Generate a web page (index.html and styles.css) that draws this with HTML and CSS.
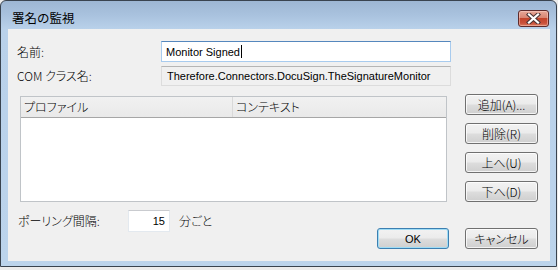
FILE: index.html
```html
<!DOCTYPE html>
<html lang="ja">
<head>
<meta charset="utf-8">
<title>署名の監視</title>
<link rel="stylesheet" href="styles.css">
</head>
<body>
<div class="window">
  <div class="titlebar">
    <span class="title">署名の監視</span>
    <div class="close">
      <svg width="17" height="11" viewBox="0 0 17 11">
        <path d="M4 1.5 L13 9.5 M13 1.5 L4 9.5" stroke="#4a3434" stroke-width="4.2" stroke-linecap="square" fill="none"/>
        <path d="M4 1.5 L13 9.5 M13 1.5 L4 9.5" stroke="#ffffff" stroke-width="2.2" stroke-linecap="square" fill="none"/>
      </svg>
    </div>
  </div>
  <div class="content">
    <div class="fields">
      <span class="label">名前:</span>
      <div class="input focused"><span class="latin">Monitor Signed</span><span class="caret"></span></div>
      <span class="label">COM クラス名:</span>
      <div class="input readonly"><span class="latin">Therefore.Connectors.DocuSign.TheSignatureMonitor</span></div>
    </div>
    <div class="middle">
      <div class="listview">
        <div class="lv-header">
          <div class="lv-col first">プロファイル</div>
          <div class="lv-col">コンテキスト</div>
        </div>
      </div>
      <div class="side-buttons">
        <div class="btn">追加(A)...</div>
        <div class="btn">削除(R)</div>
        <div class="btn">上へ(U)</div>
        <div class="btn">下へ(D)</div>
      </div>
    </div>
    <div class="bottom">
      <div class="polling">
        <span class="label poll-label">ポーリング間隔:</span>
        <div class="input number"><span class="latin">15</span></div>
        <span class="label unit">分ごと</span>
      </div>
      <div class="dialog-buttons">
        <div class="btn default ok">OK</div>
        <div class="btn">キャンセル</div>
      </div>
    </div>
  </div>
</div>
</body>
</html>
```
FILE: styles.css
```css
html, body {
  margin: 0;
  padding: 0;
}
body {
  background: #ececec;
  width: 558px;
  height: 270px;
  overflow: hidden;
  font-family: "Noto Sans CJK JP", "Liberation Sans", sans-serif;
  font-size: 12px;
  font-weight: 300;
  font-feature-settings: "palt";
  color: #000;
}
.window {
  width: 557px;
  height: 267px;
  box-sizing: border-box;
  border: 1px solid #39434f;
  border-radius: 6px 6px 0 0;
  background: linear-gradient(180deg, #9db6d3 0px, #a9c2de 14px, #b9d1ea 28px, #bcd4ec 100%);
  display: flex;
  flex-direction: column;
}
.titlebar {
  height: 28px;
  display: flex;
  align-items: flex-start;
  padding-left: 11px;
}
.title {
  margin-top: 8px;
  line-height: 18px;
  font-size: 12.5px;
  font-weight: 400;
  font-feature-settings: normal;
  color: #000;
}
.close {
  margin-left: auto;
  margin-top: 9px;
  margin-right: 7px;
  width: 31px;
  height: 17px;
  box-sizing: border-box;
  border: 1px solid #5e2b2b;
  border-radius: 3px;
  background: linear-gradient(180deg, #e7a898 0%, #d98572 45%, #c3452c 50%, #c9503a 80%, #da7a5e 100%);
  display: flex;
  align-items: center;
  justify-content: center;
  box-shadow: inset 0 0 0 1px rgba(255, 220, 210, 0.45);
}
.close svg {
  display: block;
}
.content {
  margin: 0 6px 5px 7px;
  flex: 1;
  background: #f0f0f0;
  display: flex;
  flex-direction: column;
}
.latin {
  font-family: "Liberation Sans", sans-serif;
  font-size: 11px;
  font-weight: 400;
}
.fields {
  display: grid;
  grid-template-columns: 144px 290px;
  grid-template-rows: 21px 20px;
  row-gap: 4px;
  align-items: center;
  margin: 12px 0 0 9px;
}
.label {
  line-height: 16px;
  white-space: nowrap;
}
.input {
  box-sizing: border-box;
  height: 100%;
  border: 1px solid #abadb3;
  background: #fff;
  display: flex;
  align-items: center;
  padding-left: 4px;
  white-space: nowrap;
}
.input.focused {
  border-color: #5587bd #a8cbee #a8cbee #a8cbee;
}
.caret {
  width: 1px;
  height: 13px;
  background: #000;
  margin-left: 1px;
}
.input.readonly {
  background: #f0f0f0;
  border-color: #b5b5b5 #dcdcdc #dcdcdc #dcdcdc;
  padding-left: 5px;
}
.middle {
  display: flex;
  align-items: flex-start;
  margin: 10px 0 0 12px;
}
.listview {
  width: 427px;
  height: 106px;
  box-sizing: border-box;
  border: 1px solid #c0c4c8;
  background: #fff;
}
.lv-header {
  display: flex;
  height: 21px;
  box-sizing: border-box;
  border-bottom: 1px solid #a6a6a6;
  background: linear-gradient(180deg, #f1f1f1, #e9e9e9);
}
.lv-col {
  padding-left: 3px;
  line-height: 20px;
  flex: 1;
}
.lv-col.first {
  flex: 0 0 212px;
  box-sizing: border-box;
  border-right: 1px solid #d9d9d9;
}
.side-buttons {
  display: flex;
  flex-direction: column;
  gap: 8px;
  margin: -2px 0 0 18px;
}
.btn {
  width: 73px;
  height: 21px;
  box-sizing: border-box;
  border: 1px solid #707070;
  border-radius: 3px;
  background: linear-gradient(180deg, #f2f2f2 0%, #ebebeb 48%, #dddddd 52%, #cfcfcf 100%);
  box-shadow: inset 0 0 0 1px rgba(255, 255, 255, 0.75);
  display: flex;
  align-items: center;
  justify-content: center;
  line-height: 16px;
  white-space: nowrap;
}
.btn.default {
  border-color: #3c7fb1;
  box-shadow: inset 0 0 0 1px #9fdcf5;
}
.btn.ok {
  width: 72px;
  font-family: "Liberation Sans", sans-serif;
  font-size: 11px;
  font-weight: 400;
}
.bottom {
  display: flex;
  align-items: flex-start;
}
.polling {
  display: flex;
  align-items: center;
  margin: 8px 0 0 10px;
}
.poll-label {
  width: 110px;
}
.input.number {
  width: 42px;
  height: 22px;
  justify-content: flex-end;
  padding: 0 4px 0 0;
  border-color: #c9cbcf #e3e9ef #e3e9ef #e3e9ef;
}
.unit {
  margin-left: 9px;
}
.dialog-buttons {
  margin: 26px 12px 0 auto;
  display: flex;
  gap: 16px;
}
```
